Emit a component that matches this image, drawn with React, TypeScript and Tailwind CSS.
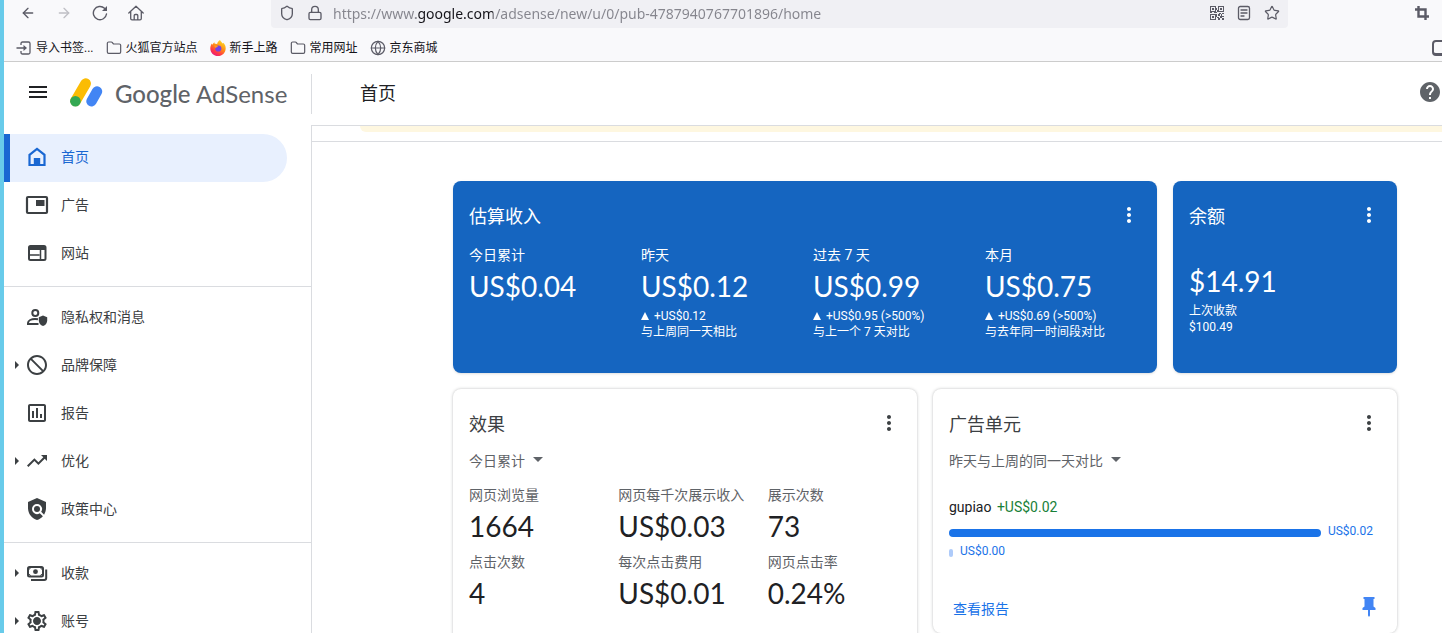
import React, { useState } from 'react';
import { ArrowLeft, ArrowRight, Globe, Folder, Shield, Lock, Star } from 'lucide-react';
import { MdMenu, MdMoreVert, MdHelp, MdDoNotDisturb, MdOutlineAssessment, MdTrendingUp, MdPolicy, MdOutlineSettings } from 'react-icons/md';

const HomeIcon = () => (
    <svg viewBox="0 0 24 24" className="w-6 h-6" fill="none">
        <path d="M4.500 9.800 12 4l7.500 5.800V20h-15z" stroke="currentColor" strokeWidth="2.200" />
        <path d="M8.800 13h6.400v7H8.800z" fill="currentColor" />
    </svg>
);

const AdsIcon = () => (
    <svg viewBox="0 0 24 24" className="w-6 h-6" fill="none">
        <rect x="2" y="4" width="20" height="16" rx="1" stroke="currentColor" strokeWidth="2.200" />
        <path d="M11 7h8.500v6H11z" fill="currentColor" />
    </svg>
);

const SitesIcon = () => (
    <svg viewBox="0 0 24 24" className="w-6 h-6" fill="none">
        <rect x="4" y="5" width="16.500" height="14" rx="1.500" stroke="currentColor" strokeWidth="2" />
        <path d="M4 5h16v4H4z" fill="currentColor" />
        <path d="M4 14h10.500M15.500 8v11" stroke="currentColor" strokeWidth="1.500" />
    </svg>
);

const PrivacyIcon = () => (
    <svg viewBox="0 0 24 24" className="w-6 h-6" fill="none">
        <circle cx="10.300" cy="8" r="3" stroke="currentColor" strokeWidth="2" />
        <path d="M13 14.300c-1-.2-2-.3-3-.3-3.500 0-7 1.500-7 4v1h10.500" stroke="currentColor" strokeWidth="2" />
        <path d="M18 10.500l4.200 1.700v3.200c0 2.600-1.700 4.800-4.200 5.600-2.500-.8-4.200-3-4.200-5.600v-3.200z" fill="currentColor" />
    </svg>
);

const PaymentsIcon = () => (
    <svg viewBox="0 0 24 24" className="w-6 h-6" fill="none" stroke="currentColor" strokeWidth="2">
        <rect x="3" y="6" width="15" height="9.500" rx="1.500" />
        <circle cx="10.500" cy="10.700" r="2.400" fill="currentColor" stroke="none" />
        <path d="M3 8.500Q5.500 8.500 5.500 6M3 13q2.500 0 2.500 2.500M18 8.500q-2.500 0-2.500-2.500M18 13q-2.500 0-2.500 2.500" strokeWidth="1" />
        <path d="M21.200 8.500v8.500q0 2-2 2H6" />
    </svg>
);

const AccountIcon = () => (
    <span className="relative flex w-6 h-6">
        <MdOutlineSettings className="w-6 h-6" />
        <span className="absolute inset-0 m-auto w-1.5 h-1.5 rounded-full bg-current" />
    </span>
);

const AdSenseLogo = () => (
    <svg viewBox="0 0 33 31" className="w-[33px] h-[31px] shrink-0" strokeLinecap="round">
        <path d="M15.700 5.500 5.500 23" stroke="#fbbc04" strokeWidth="10.500" />
        <path d="M27 13.500 21.500 23.300" stroke="#4285f4" strokeWidth="10.400" />
        <circle cx="5.400" cy="23.200" r="5.300" fill="#34a853" />
    </svg>
);

const FirefoxIcon = () => (
    <svg viewBox="0 0 16 16" className="w-4 h-4">
        <defs>
            <linearGradient id="fox" x1="0.800" y1="0" x2="0.200" y2="1">
                <stop offset="0" stopColor="#ffe226" />
                <stop offset="0.450" stopColor="#ff8a16" />
                <stop offset="0.750" stopColor="#ff3647" />
                <stop offset="1" stopColor="#e31587" />
            </linearGradient>
        </defs>
        <path d="M10 0c.5 1.500 2 2.300 2.700 3.500l.6-.8c1.500 1.500 2.500 3.500 2.400 5.700C15.600 12.600 12.200 16 8 16S.3 12.600.3 8.400c0-2 .7-3.800 1.500-5l.4 1.300L4.300 2.200l.4 1.600c1 0 1.800.1 2.400.4C7.500 2.300 8.500.7 10 0z" fill="url(#fox)" />
        <circle cx="8.300" cy="8.500" r="3.100" fill="#7542e5" />
        <path d="M3.800 5.600c1.700-.5 3.600.1 4.300 1.200-1.500.1-2 .8-2.200 1.600z" fill="#ff9a1f" />
    </svg>
);

const ImportIcon = () => (
    <svg viewBox="0 0 16 16" className="w-4 h-4" fill="none" stroke="currentColor" strokeWidth="1.300">
        <path d="M5 5V3.500Q5 2 6.500 2h6Q14 2 14 3.500v9q0 1.500-1.500 1.500h-6Q5 14 5 12.500V11M.5 8H9" />
        <path d="M7.500 5 11 8l-3.500 3z" fill="currentColor" stroke="none" />
    </svg>
);

const ReloadIcon = () => (
    <svg viewBox="0 0 16 16" className="w-4 h-4" fill="none" stroke="currentColor" strokeWidth="1.400" strokeLinecap="round">
        <path d="M14.500 9A6.600 6.600 0 1 1 12.500 3.300" />
        <path d="M15 1v5h-5z" fill="currentColor" stroke="none" />
    </svg>
);

const BrowserHomeIcon = () => (
    <svg viewBox="0 0 16 16" className="w-4 h-4" fill="none" stroke="currentColor" strokeWidth="1.300" strokeLinejoin="round" strokeLinecap="round">
        <path d="M.8 8 8 1.200 15.200 8M2.700 6.500v7q0 1.300 1.300 1.300h8q1.300 0 1.300-1.300v-7M6.200 14.500v-4q0-1 1-1h1.600q1 0 1 1v4" />
    </svg>
);

const QrIcon = () => (
    <svg viewBox="0 0 14 14" className="w-3.5 h-3.5" fill="currentColor" shapeRendering="crispEdges">
        <path fillRule="evenodd" d="M0 0h6v6H0zM1 1v4h4V1zM8 0h6v6H8zM9 1v4h4V1zM0 8h6v6H0zM1 9v4h4V9z" />
        <path d="M2 2h2v2H2zM10 2h2v2h-2zM2 10h2v2H2zM6 2h1v2H6zM7 4h1v2H7zM0 6h2v1H0zM4 6h3v1H4zM9 7h2v1H9zM12 7h2v1h-2zM8 8h2v2H8zM11 8h1v2h-1zM12 10h2v1h-2zM10 10h2v2h-2zM7 11h2v1H7zM8 12h2v2H8zM12 12h2v2h-2zM6 8h1v3H6z" />
    </svg>
);

const ReaderIcon = () => (
    <svg viewBox="0 0 16 16" className="w-4 h-4" fill="none" stroke="currentColor" strokeWidth="1.300" strokeLinecap="round">
        <rect x="2.500" y="1.500" width="11" height="13" rx="1.800" />
        <path d="M5 5h6M5 8h6M5 11h3" />
    </svg>
);

const CropIcon = () => (
    <svg viewBox="0 0 14 14" className="w-3.5 h-3.5" fill="none" stroke="currentColor" strokeWidth="2.400">
        <path d="M3.500 0v10.500H14M0 3.500h10.500V14" />
    </svg>
);

const PinIcon = () => (
    <svg viewBox="0 0 14 20" className="w-3.5 h-5" fill="currentColor">
        <path d="M1.500 0h11v2h-1v7.500L13.500 11v2H8v5.500L7 20l-1-1.500V13H.5v-2l2-1.500V2h-1z" />
    </svg>
);

const navGroups = [
    [
        { label: '首页', icon: HomeIcon, active: true },
        { label: '广告', icon: AdsIcon },
        { label: '网站', icon: SitesIcon },
    ],
    [
        { label: '隐私权和消息', icon: PrivacyIcon },
        { label: '品牌保障', icon: MdDoNotDisturb, expandable: true },
        { label: '报告', icon: MdOutlineAssessment },
        { label: '优化', icon: MdTrendingUp, expandable: true },
        { label: '政策中心', icon: MdPolicy },
    ],
    [
        { label: '收款', icon: PaymentsIcon, expandable: true },
        { label: '账号', icon: AccountIcon, expandable: true },
    ],
] as { label: string; icon: React.ElementType; active?: boolean; expandable?: boolean }[][];

const bookmarks = [
    { label: '导入书签...', icon: <ImportIcon /> },
    { label: '火狐官方站点', icon: <Folder className="w-4 h-4" strokeWidth={1.8} /> },
    { label: '新手上路', icon: <FirefoxIcon /> },
    { label: '常用网址', icon: <Folder className="w-4 h-4" strokeWidth={1.8} /> },
    { label: '京东商城', icon: <Globe className="w-4 h-4" strokeWidth={1.8} /> },
];

const earnings = [
    { label: '今日累计', value: 'US$0.04' },
    { label: '昨天', value: 'US$0.12', delta: '+US$0.12', note: '与上周同一天相比' },
    { label: '过去 7 天', value: 'US$0.99', delta: '+US$0.95 (>500%)', note: '与上一个 7 天对比' },
    { label: '本月', value: 'US$0.75', delta: '+US$0.69 (>500%)', note: '与去年同一时间段对比' },
];

const metrics = [
    { label: '网页浏览量', value: '1664' },
    { label: '网页每千次展示收入', value: 'US$0.03' },
    { label: '展示次数', value: '73' },
    { label: '点击次数', value: '4' },
    { label: '每次点击费用', value: 'US$0.01' },
    { label: '网页点击率', value: '0.24%' },
];

const BrowserBar = () => {
    const [url, setUrl] = useState('https://www.google.com/adsense/new/u/0/pub-4787940767701896/home');

    return (
        <div className="shrink-0 bg-[#f9f9fb] border-b border-[#cccccc] text-[#5b5b66]">
            <div className="flex h-7 items-start">
                <div className="flex h-[26px] items-center gap-5 pl-4 shrink-0">
                    <button aria-label="后退"><ArrowLeft className="w-4 h-4" strokeWidth={2} /></button>
                    <button aria-label="前进" disabled className="text-[#bfbfc5]"><ArrowRight className="w-4 h-4" strokeWidth={2} /></button>
                    <button aria-label="刷新"><ReloadIcon /></button>
                    <button aria-label="主页"><BrowserHomeIcon /></button>
                </div>
                <div className="flex flex-1 min-w-0 h-7 pb-0.5 items-center ml-[127px] mr-[127px] pl-2 pr-2 gap-3 bg-[#f0f0f4] rounded-b">
                    <Shield className="w-4 h-4 shrink-0" strokeWidth={2} />
                    <Lock className="w-4 h-4 shrink-0" strokeWidth={2} />
                    <input
                        aria-label="网址"
                        type="text"
                        value={url}
                        onChange={e => setUrl(e.target.value)}
                        className="flex-1 min-w-0 -ml-0.5 text-[14px] font-['Noto_Sans',sans-serif] outline-none text-transparent bg-clip-text bg-[linear-gradient(90deg,#85858d_83px,#15141a_83px,#15141a_160px,#85858d_160px)]"
                    />
                    <button aria-label="二维码"><QrIcon /></button>
                    <button aria-label="阅读模式"><ReaderIcon /></button>
                    <button aria-label="添加书签"><Star className="w-4 h-4" strokeWidth={1.8} /></button>
                </div>
                <button aria-label="截图" className="flex h-[26px] items-center pr-[13px]"><CropIcon /></button>
            </div>
            <div className="flex h-[33px] pt-1.5 items-center gap-3 pl-3 overflow-hidden">
                {bookmarks.map(b => (
                    <button key={b.label} className="flex items-center gap-1 text-xs text-[#15141a] whitespace-nowrap">
                        <span className="text-[#5b5b66]">{b.icon}</span>
                        {b.label}
                    </button>
                ))}
                <button aria-label="移动设备书签" className="ml-auto -mr-1.5 shrink-0">
                    <span className="block w-4 h-4 rounded-sm border-2 border-b-[3px] border-current" />
                </button>
            </div>
        </div>
    );
};

const Sidebar = () => (
    <nav className="w-[308px] shrink-0 border-r border-[#dadce0] pt-[9px] text-sm text-[#3c4043]">
        {navGroups.map((group, i) => (
            <div key={i} className={i === 0 ? 'pb-2' : 'pt-[7px] pb-2 border-t border-[#dadce0]'}>
                {group.map(item => (
                    <a
                        key={item.label}
                        href="#"
                        className={item.active
                            ? 'flex items-center h-12 pb-0.5 mr-6 border-l-[6px] border-[#1967d2] bg-[#e8f0fe] text-[#1967d2] rounded-r-full'
                            : 'flex items-center h-12 pb-0.5 border-l-[6px] border-transparent'}
                    >
                        <span className="w-[15px] pl-[5px] shrink-0">
                            {item.expandable && <span className="block w-0 border-y-4 border-y-transparent border-l-4 border-l-[#3c4043]" />}
                        </span>
                        <item.icon className="w-6 h-6 shrink-0" />
                        <span className="ml-3">{item.label}</span>
                    </a>
                ))}
            </div>
        ))}
    </nav>
);

const CardHeader = ({ title }: { title: string }) => (
    <div className="flex items-center justify-between h-8 pr-4">
        <h2 className="pt-1 text-lg leading-7">{title}</h2>
        <button aria-label={`${title}选项`}><MdMoreVert className="w-6 h-6" /></button>
    </div>
);

const RangeSelect = ({ label, value }: { label: string; value: string }) => (
    <div className="flex items-center h-6 mt-2.5 gap-2 text-sm text-[#5f6368]">
        <select aria-label={label} className="appearance-none bg-transparent outline-none">
            <option>{value}</option>
        </select>
        <span className="mb-1 border-x-[5px] border-x-transparent border-t-[5px] border-t-[#5f6368] pointer-events-none" />
    </div>
);

const UnitBar = ({ value, ratio, className }: { value: string; ratio: number; className: string }) => (
    <div className="flex items-center h-5 gap-[7px] pr-6 text-xs text-[#1a73e8]">
        <div className={`mt-1 h-2 rounded-full min-w-1 ${className}`} style={{ width: `${ratio * 100}%` }} />
        <span>{value}</span>
    </div>
);

export default function App() {
    return (
        <div className="flex flex-col h-screen overflow-hidden border-l-4 border-[#68cbea] bg-white text-[#202124] font-[Roboto,'Noto_Sans_CJK_SC',sans-serif]">
            <BrowserBar />

            <header className="flex h-[63px] shrink-0 items-center">
                <div className="flex items-center w-[308px] h-10 border-r border-[#dadce0] pl-[22px]">
                    <button aria-label="菜单" className="pb-1"><MdMenu className="w-6 h-6" /></button>
                    <a href="#" className="flex items-center ml-5 gap-3">
                        <AdSenseLogo />
                        <span className="text-2xl leading-8 text-[#5f6368] font-[Lato,sans-serif] whitespace-nowrap">
                            <span className="font-medium">Google</span> AdSense
                        </span>
                    </a>
                </div>
                <h1 className="ml-12 text-lg">首页</h1>
                <button aria-label="帮助" className="ml-auto pb-1 text-[#5f6368]"><MdHelp className="w-6 h-6" /></button>
            </header>

            <div className="flex flex-1 min-h-0">
                <Sidebar />
                <main className="flex-1 min-w-0 border-t border-[#dadce0] overflow-hidden">
                    <div className="h-4 border-b border-[#dadce0]">
                        <div className="ml-12 h-1.5 bg-[#fef7e0] rounded-bl-lg" />
                    </div>

                    <div className="pl-24 pt-[39px]">
                        <div className="grid grid-cols-4 items-start gap-4 max-w-[944px] mx-auto">
                            <section className="col-span-3 h-48 pl-4 pt-[18px] rounded-lg bg-[#1565c0] text-white shadow">
                                <CardHeader title="估算收入" />
                                <div className="grid grid-cols-4 mt-3.5">
                                    {earnings.map(e => (
                                        <div key={e.label}>
                                            <div className="text-sm leading-5">{e.label}</div>
                                            <div className="mt-[3px] text-[28px] leading-9 font-[Lato,sans-serif]">{e.value}</div>
                                            {e.delta && (
                                                <div className="mt-1 text-xs leading-4">
                                                    <div className="flex items-center gap-[5px]">
                                                        <span className="border-x-4 border-x-transparent border-b-8 border-b-white" />
                                                        {e.delta}
                                                    </div>
                                                    <div>{e.note}</div>
                                                </div>
                                            )}
                                        </div>
                                    ))}
                                </div>
                            </section>

                            <section className="h-48 pl-4 pt-[18px] rounded-lg bg-[#1565c0] text-white shadow">
                                <CardHeader title="余额" />
                                <div className="mt-8 text-[28px] leading-9 font-[Lato,sans-serif]">$14.91</div>
                                <div className="mt-1 text-xs leading-4">
                                    <div>上次收款</div>
                                    <div>$100.49</div>
                                </div>
                            </section>

                            <section className="col-span-2 h-[400px] pl-4 pt-[18px] rounded-lg bg-white shadow-[0_0_3px_rgba(60,64,67,0.35)]">
                                <div className="text-[#3c4043]"><CardHeader title="效果" /></div>
                                <RangeSelect label="效果时间段" value="今日累计" />
                                <div className="grid grid-cols-3 mt-3">
                                    {metrics.map(m => (
                                        <div key={m.label} className="h-[67px]">
                                            <div className="text-sm leading-5 text-[#5f6368]">{m.label}</div>
                                            <div className="mt-[3px] text-[28px] leading-9 font-[Lato,sans-serif]">{m.value}</div>
                                        </div>
                                    ))}
                                </div>
                            </section>

                            <section className="col-span-2 pl-4 pt-[18px] pb-3 rounded-lg bg-white shadow-[0_0_3px_rgba(60,64,67,0.35)]">
                                <div className="text-[#3c4043]"><CardHeader title="广告单元" /></div>
                                <RangeSelect label="广告单元时间段" value="昨天与上周的同一天对比" />
                                <div className="mt-[22px] text-sm leading-6">
                                    gupiao <span className="ml-0.5 text-[#188038]">+US$0.02</span>
                                </div>
                                <div className="mt-0.5">
                                    <UnitBar value="US$0.02" ratio={1} className="bg-[#1a73e8]" />
                                    <UnitBar value="US$0.00" ratio={0} className="bg-[#aecbfa]" />
                                </div>
                                <div className="flex items-center justify-between mt-9 pl-1 pr-[21px] h-6">
                                    <a href="#" className="text-sm text-[#1a73e8]">查看报告</a>
                                    <button aria-label="固定" className="pb-1 text-[#4285f4]"><PinIcon /></button>
                                </div>
                            </section>
                        </div>
                    </div>
                </main>
            </div>
        </div>
    );
}
